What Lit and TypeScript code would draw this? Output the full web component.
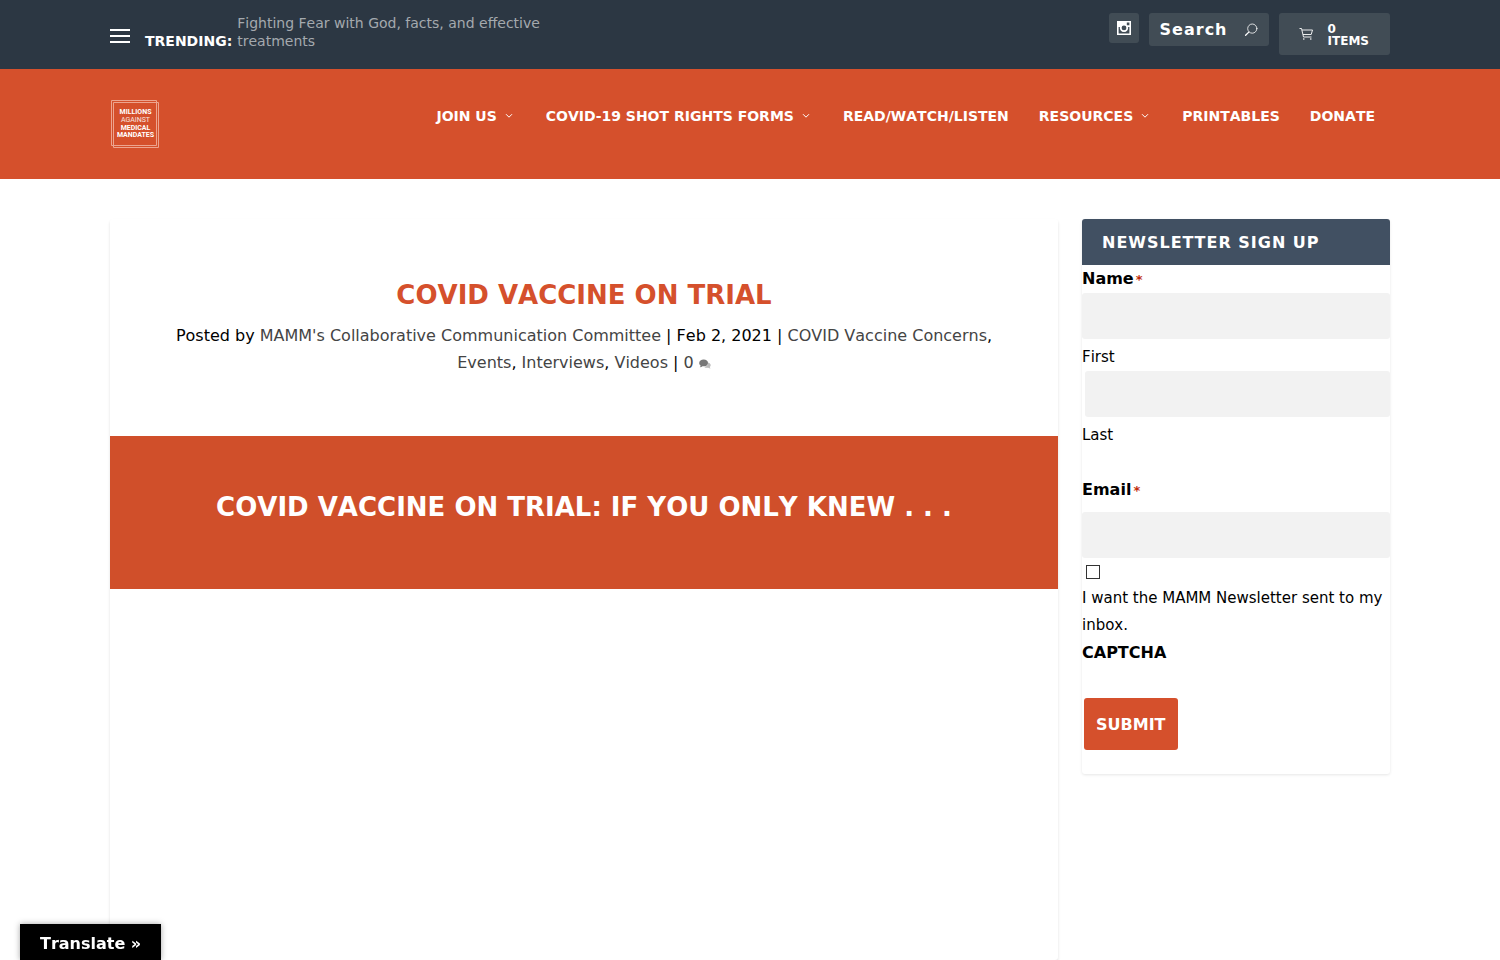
import { LitElement, html, css, svg } from "lit";
import { customElement } from "lit/decorators.js";

const NAV = [
  { label: "JOIN US", menu: true },
  { label: "COVID-19 SHOT RIGHTS FORMS", menu: true },
  { label: "READ/WATCH/LISTEN", menu: false },
  { label: "RESOURCES", menu: true },
  { label: "PRINTABLES", menu: false },
  { label: "DONATE", menu: false },
];

const LOGO_LINES = [
  { text: "MILLIONS", y: 15, light: false },
  { text: "AGAINST", y: 23, light: true },
  { text: "MEDICAL", y: 31, light: false },
  { text: "MANDATES", y: 38, light: false },
];

@customElement("top-bar")
class TopBar extends LitElement {
  static styles = css`
    :host { display: block; background: #2c3743; font-family: "DejaVu Sans", sans-serif; }
    .inner {
      box-sizing: border-box; width: 86%; max-width: 1280px; margin: 0 auto;
      padding: 13px 0 14px; display: flex; justify-content: space-between; align-items: flex-start;
    }
    .trending { display: flex; align-items: flex-end; padding-top: 1px; font-size: 14px; line-height: 18px; }
    .menu { border: 0; background: none; padding: 0; margin: 0 15px 7px 0; width: 20px; height: 14px; display: block; cursor: pointer; }
    .menu svg { display: block; }
    .label { color: #fff; font-weight: bold; margin-right: 5px; }
    .story { color: #a4a9ae; text-decoration: none; width: 310px; }
    .tools { display: flex; align-items: flex-start; gap: 10px; }
    .social, .search, .cart { background: #414c55; border-radius: 3px; display: flex; align-items: center; }
    .social { width: 30px; height: 30px; justify-content: center; }
    .search { box-sizing: border-box; width: 120px; height: 33px; padding: 0 11px; }
    .search input {
      flex: 1; min-width: 0; border: 0; padding: 0; background: none; outline: none; color: #fff;
      font: bold 16px "DejaVu Sans", sans-serif; font-kerning: none; letter-spacing: 1px;
    }
    .search input::placeholder { color: #fff; opacity: 1; }
    .go { border: 0; padding: 0; background: none; display: flex; }
    .cart {
      box-sizing: border-box; height: 42px; padding: 2px 21px 0 20px; gap: 14px; color: #fff; text-decoration: none;
      font-weight: bold; font-size: 12px; line-height: 12px;
    }
    .cart svg { margin-bottom: 2px; }
    .count { display: flex; flex-direction: column; }
  `;
  render() {
    return html`<div class="inner">
      <div class="trending">
        <button class="menu" aria-label="Menu">
          <svg width="20" height="14"><path d="M0 0h20v2H0zM0 6h20v2H0zM0 12h20v2H0z" fill="#fff" /></svg>
        </button>
        <span class="label">TRENDING:</span>
        <a class="story" href="#">Fighting Fear with God, facts, and effective treatments</a>
      </div>
      <div class="tools">
        <a class="social" href="#" aria-label="Instagram">
          <svg width="14" height="14" viewBox="0 0 14 14">
            <path fill="#fff" fill-rule="evenodd" d="M0 0h14v14H0zM1.6 6v6.4h10.8V6h-1.3a4.2 4.2 0 1 1-8.2 0zM9.8 1.6v2.6h2.6V1.6z" />
            <circle cx="7" cy="6.9" r="3.4" fill="#fff" /><circle cx="7" cy="6.9" r="2.4" fill="#414c55" />
          </svg>
        </a>
        <form class="search" role="search">
          <input type="text" placeholder="Search" aria-label="Search" />
          <button class="go" type="button" aria-label="Go">
            <svg width="14" height="14" viewBox="0 0 14 14" fill="none" stroke="#fff" stroke-linecap="round">
              <circle cx="8.3" cy="5.6" r="4.6" stroke-width=".8" /><path d="M4.8 9.1 1.6 12.2" stroke-width="1.3" />
            </svg>
          </button>
        </form>
        <a class="cart" href="#">
          <svg width="15" height="14" viewBox="0 0 15 14" fill="none" stroke="#fff" stroke-width=".9">
            <path d="M.5 1.5h2l2 8.5h8M3 3h10.5l-1.3 4.5H4" />
            <circle cx="4.8" cy="12" r=".8" fill="#fff" stroke="none" /><circle cx="11.8" cy="12" r=".8" fill="#fff" stroke="none" />
          </svg>
          <span class="count"><span>0</span><span>ITEMS</span></span>
        </a>
      </div>
    </div>`;
  }
}

@customElement("main-header")
class MainHeader extends LitElement {
  static styles = css`
    :host { display: block; background: #d5502c; font-family: "DejaVu Sans", sans-serif; }
    .inner { width: 86%; max-width: 1280px; margin: 0 auto; padding: 30px 0; display: flex; justify-content: space-between; align-items: flex-start; }
    .logo, .logo svg { display: block; }
    .bold { font: bold 7px Roboto, sans-serif; }
    .light { font: 7px Roboto, sans-serif; opacity: 0.85; }
    nav { display: flex; gap: 30px; padding: 8px 15px 0 0; }
    nav a { display: flex; align-items: center; gap: 8px; color: #fff; text-decoration: none; font-weight: bold; font-size: 14px; line-height: 18px; }
    nav svg { margin-right: 3px; }
  `;
  render() {
    return html`<div class="inner">
      <a class="logo" href="#" aria-label="Home">
        <svg width="50" height="50" viewBox="0 0 50 50">
          <g fill="none" stroke="#eda48f"><path d="M1.5 1.5h45v45h-45z" /><path d="M3.5 3.5h45v45h-45z" /></g>
          ${LOGO_LINES.map((l) => svg`<text class=${l.light ? "light" : "bold"} x="25.5" y=${l.y} text-anchor="middle" fill="#fff">${l.text}</text>`)}
        </svg>
      </a>
      <nav>
        ${NAV.map((n) => html`<a href="#">${n.label}${n.menu
          ? html`<svg width="8" height="6" viewBox="0 0 8 6"><path d="M1 1.2l3 3 3-3" fill="none" stroke="#fff" /></svg>`
          : ""}</a>`)}
      </nav>
    </div>`;
  }
}

@customElement("post-article")
class PostArticle extends LitElement {
  static styles = css`
    :host { display: block; font-family: "DejaVu Sans", sans-serif; }
    .card { box-sizing: border-box; height: 100%; border-radius: 3px; box-shadow: 0 2px 3px rgba(0, 0, 0, 0.12); text-align: center; }
    header { padding: 60px; }
    h1, h2 { margin: 0; font-size: 26px; line-height: 32px; }
    h1 { color: #d5502c; }
    .meta { margin: 11px 0 0; font-size: 16px; line-height: 27px; color: #000; }
    .meta a { color: #444; text-decoration: none; }
    .meta svg { margin-bottom: -1px; }
    .band { background: #d04f2a; color: #fff; padding: 55px 20px 66px; }
  `;
  render() {
    return html`<article class="card">
      <header>
        <h1>COVID VACCINE ON TRIAL</h1>
        <p class="meta">Posted by <a href="#">MAMM's Collaborative Communication Committee</a> | Feb 2, 2021 | <a href="#">COVID Vaccine Concerns</a>, <a href="#">Events</a>, <a href="#">Interviews</a>, <a href="#">Videos</a> | <a href="#">0 <svg width="12" height="10" viewBox="0 0 12 10"><path d="M8.5 3.5c2 .2 3.3 1.3 3.2 2.8 0 .8-.5 1.4-1 1.8l.8 1.4c-1 0-1.7-.3-2.2-.7-1.5.2-3 0-3.9-.9 2.5-.3 4-2 3.1-4.4z" fill="#bbb" /><path d="M4.7.5C7.2.5 9 1.900 9 3.900S7.200 7.300 4.700 7.300c-.4 0-.8 0-1.200-.1-.7.6-1.600 1-2.700 1 .5-.5.8-1 .8-1.700C.7 5.900.2 5 .2 3.900.2 1.900 2.200.5 4.700.5z" fill="#777" /></svg></a></p>
      </header>
      <div class="band"><h2>COVID VACCINE ON TRIAL: IF YOU ONLY KNEW . . .</h2></div>
    </article>`;
  }
}

@customElement("newsletter-box")
class NewsletterBox extends LitElement {
  static styles = css`
    :host { display: block; font-family: "DejaVu Sans", sans-serif; }
    .card { border-radius: 3px; box-shadow: 0 1px 3px rgba(0, 0, 0, 0.1); }
    h4 {
      margin: 0; padding: 15px 20px 13px; border-radius: 3px 3px 0 0; background: #415062; color: #fff;
      font-size: 16px; line-height: 18px; letter-spacing: 1px;
    }
    form { display: flex; flex-direction: column; padding-bottom: 24px; font-size: 15px; line-height: 27px; color: #000; }
    fieldset { border: 0; margin: 0; padding: 0; min-width: 0; display: flex; flex-direction: column; }
    legend { padding: 0; }
    .title { font-weight: bold; font-size: 16px; line-height: 28px; }
    .req { color: #c02b0a; font-size: 13px; line-height: 1; margin-left: 2px; }
    .field { box-sizing: border-box; height: 46px; border: 0; border-radius: 3px; background: #f2f2f2; padding: 0 12px; font: 15px "DejaVu Sans", sans-serif; }
    .last { margin-left: 3px; }
    .sub { line-height: 32px; padding-top: 2px; height: 30px; }
    .email { margin: 27px 0 8px; }
    .check { appearance: none; box-sizing: border-box; width: 14px; height: 14px; margin: 7px 4px 6px; border: 1px solid #333; background: #fff; }
    .submit {
      align-self: flex-start; margin: 31px 0 0 2px; padding: 0 12px; height: 52px; border: 0; border-radius: 3px;
      background: #d5502c; color: #fff; font: bold 16px "DejaVu Sans", sans-serif; font-kerning: none;
    }
  `;
  render() {
    return html`<section class="card">
      <h4>NEWSLETTER SIGN UP</h4>
      <form>
        <fieldset>
          <legend class="title">Name<span class="req">*</span></legend>
          <input class="field" id="first" type="text" /><label class="sub" for="first">First</label>
          <input class="field last" id="last" type="text" /><label class="sub" for="last">Last</label>
        </fieldset>
        <label class="title email" for="email">Email<span class="req">*</span></label>
        <input class="field" id="email" type="email" />
        <input class="check" id="optin" type="checkbox" />
        <label for="optin">I want the MAMM Newsletter sent to my inbox.</label>
        <span class="title">CAPTCHA</span>
        <button class="submit" type="button">SUBMIT</button>
      </form>
    </section>`;
  }
}

@customElement("app-root")
class AppRoot extends LitElement {
  static styles = css`
    :host {
      display: flex; flex-direction: column; height: 100vh; overflow: hidden; background: #fff;
      font-family: "DejaVu Sans", sans-serif; font-kerning: none;
    }
    main {
      flex: 1; box-sizing: border-box; width: 86%; max-width: 1280px; margin: 0 auto; padding-top: 40px;
      display: grid; grid-template-columns: minmax(0, 1fr) 308px; gap: 24px;
    }
    newsletter-box { align-self: start; }
    .translate {
      position: fixed; left: 20px; bottom: 0; border: 0; padding: 10px 20px 7px; background: #000; color: #fff;
      font: bold 16px/19px "DejaVu Sans", sans-serif; font-kerning: none; box-shadow: 0 0 6px rgba(0, 0, 0, 0.35);
    }
  `;
  render() {
    return html`<top-bar></top-bar>
      <main-header></main-header>
      <main><post-article></post-article><newsletter-box></newsletter-box></main>
      <button class="translate">Translate »</button>`;
  }
}
